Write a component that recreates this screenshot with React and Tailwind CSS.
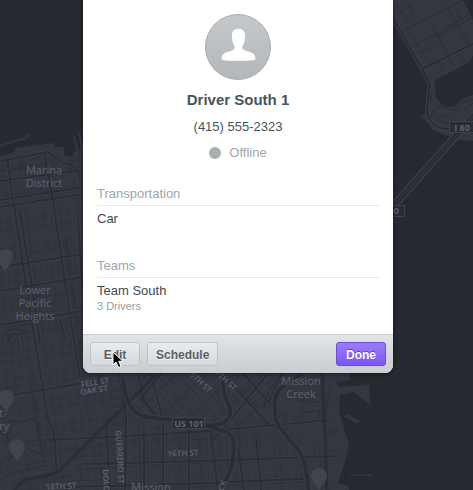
const placeLabels = [
  { text: 'Marina', x: 44, y: 174 },
  { text: 'District', x: 44, y: 187 },
  { text: 'Lower', x: 35, y: 294 },
  { text: 'Pacific', x: 35, y: 307 },
  { text: 'Heights', x: 35, y: 320 },
  { text: 'Mission', x: 301, y: 385 },
  { text: 'Creek', x: 301, y: 398 },
  { text: 'Mission', x: 151, y: 491 },
  { text: 't-', x: 3, y: 417 },
  { text: 'ry', x: 4, y: 430 },
];

const streetLabels = [
  { text: 'FELL ST', x: 95, y: 385, angle: -9 },
  { text: 'OAK ST', x: 94, y: 393, angle: -9 },
  { text: '5TH ST', x: 201, y: 385, angle: 43 },
  { text: '7TH ST', x: 226, y: 383, angle: 43 },
  { text: '16TH ST', x: 183, y: 456, angle: -2 },
  { text: '18TH ST', x: 61, y: 489, angle: -3 },
  { text: 'GUERRERO ST', x: 120, y: 460, angle: 87 },
  { text: 'DOLORES ST', x: 107, y: 496, angle: 87 },
  { text: 'JAMES LICK', x: 217, y: 504, angle: -72 },
];

const minorRoads = [
  'M66 240l12 85M30 380l12 75M0 171l44-6 12-12 14 16 13-1M19 158l6 12 8-7M30 160l12-4',
  'M8 420q14 6 22-2 10 2 8 14M0 465l24-18 23 10M13 425q-10 12-2 20M22 445q25-12 24 3M0 480l14-8 32-6',
  'M2 346v-6q4-12 16-11 9 1 9 12M7 346v-4q4-9 11-8 5 1 5 9M12 346v-2q3-5 6-4l1 5',
  'M268 404l8-18 7-13M263 409l6-18 13-18M292 419l8 4 20-2-1-10-18 1M296 401l34 1M302 390v34M300 395h30M323 383v12M279 424q-3-9 5-9 4 3-1 7l4 9',
  'M321 373l4 60 1 57M330 386l-7 42M340 430l-17 4',
];

const majorRoads = [
  'M7 158l12 82 13 82 16 98 6 13 3 41',
  'M44 152l9 48 8 55 12 80 7 42',
  'M20 212l11 68 9 62M60 320l5 20',
  'M0 161l48-9 14 10 12 4 6 12 3 2M0 207l83-13M0 200l83-13M0 181l83-11',
  'M0 267l83-13M0 291l83-14M0 325l83-14M0 397l90-15',
  'M78 220l6 90 16 75M119 373l7 45-1 72M106 420l4 70',
  'M46 440l64-3 100-6 120-11M83 464l120-3 137-5M64 487l120-3 140-6',
  'M138 373l5 24 10 18M150 373l8 28 4 15M162 373l-22 27M142 400l18 19',
  'M268 373l-31 39-27 32M222 373l47 52M240 370l38 42',
  'M189 420v70M163 424v66M144 429v61M210 426l8 64M256 438l5 52M238 447l6 43',
];

const freeways = [
  'M123 379q1 14 6 24c7 17 25 15 51 17 25 1 27 8 41 10 13 3 14 12 12 27-1 15-7 20-11 33',
  'M224 373q-3 19 4 30c5 10 2 20-12 22-13 2-18-2-24-6',
  'M318 362l-26 18q-20 10-17 31c0 17 12 24 20 35 12 14 11 28 14 48',
];

const oaklandRoads = [
  'M402 31l37-18 34-19M412 46l20-10 41-24M418 53l16-7M433 38l22-11 18-10',
  'M406 28l24 36M427 16l21 38M446 6l23 38M441 34l17-9M437 60l7 11M446 55l7 11M456 50l8 12',
  'M396 4l6 8 7-5 4 7-6 5M399 10l9 12M403 0l9 7M446 16l10-5 5 9-10 5',
  'M431 118q0-10 12-12 6 4 15 5 6 0 15-8M437 120l5-5 8 2 4 4-10 2zM454 110q6-10 12-8l7-3',
];

const mapPins = [
  { x: 5, y: 257 },
  { x: 6, y: 398 },
  { x: 17, y: 447 },
  { x: 319, y: 476 },
];

function CityMap() {
  return (
    <svg
      className="absolute inset-0 h-full w-full"
      viewBox="0 0 473 490"
      preserveAspectRatio="xMidYMin slice"
      aria-hidden="true"
    >
      <defs>
        <pattern id="west-grid" width="34" height="26" patternUnits="userSpaceOnUse" patternTransform="rotate(-8)">
          <path d="M0 4h34M0 13h34M0 21h34M5 0v26M14 4v9M13 13v13M23 0v13M21 13v8M30 0v26" fill="none" stroke="#2c2f37" />
          <path d="M0 5h34M6 0v26" fill="none" stroke="#393c45" />
        </pattern>
        <pattern id="soma-grid" width="26" height="20" patternUnits="userSpaceOnUse" patternTransform="rotate(-43)">
          <path d="M0 4h26M0 14h26M6 0v20M15 4v10M21 14v10" fill="none" stroke="#2b2e36" />
          <path d="M0 5h26M7 0v20" fill="none" stroke="#3b3e47" />
        </pattern>
        <pattern id="mission-grid" width="20" height="24" patternUnits="userSpaceOnUse" patternTransform="rotate(-3)">
          <path d="M0 5h20M0 17h20M4 0v24M11 5v12M16 0v24" fill="none" stroke="#2c2f37" />
          <path d="M0 6h20M5 0v24" fill="none" stroke="#393c45" />
        </pattern>
        <clipPath id="city-land">
          <path d="M0 156l15-4v-4l39-5v4l9 0 2 9 7 0 4-6-3-14 2 0 4 15 2 0-3-19 2 0 3 15H338l-1 235 3 14-1 15 6 21 4 12-4 18-7 21 10 3 2 7 8 3 9 11H0z" />
        </clipPath>
      </defs>

      <g clipPath="url(#city-land)">
        <rect width="473" height="490" fill="#343740" />
        <path d="M0 157l83-12v225l35 10 20 36-20 28-60 46H0z" fill="url(#west-grid)" />
        <path d="M138 370h138l-2 40-64 34-25-24-55-6z" fill="url(#soma-grid)" />
        <path d="M110 428l92-6 22 14 54-24 30 30 20-4-2 52H60z" fill="url(#mission-grid)" />
        <path d="M9 425l14-3 9-4 6 8v12l-10 5-13-2zM284 374h36l1 46-24 18-20-25z" fill="#343740" />
        <g fill="none" stroke="#2b2e36">
          {minorRoads.map((d) => (
            <path key={d} d={d} />
          ))}
        </g>
        <g fill="none" stroke="#393c45" strokeWidth="4">
          {majorRoads.map((d) => (
            <path key={d} d={d} />
          ))}
        </g>
        <g fill="none" stroke="#2a2d35" strokeWidth="2">
          {majorRoads.map((d) => (
            <path key={d} d={d} />
          ))}
        </g>
        <path d="M156 375l-98 97q-14 5-32 7l-12 11M322 360l5 130" fill="none" stroke="#2a2d35" strokeWidth="3" />
        <g fill="none" stroke="#3b3e47" strokeWidth="6">
          {freeways.map((d) => (
            <path key={d} d={d} />
          ))}
        </g>
        <g fill="none" stroke="#2a2d35" strokeWidth="4">
          {freeways.map((d) => (
            <path key={d} d={d} />
          ))}
        </g>
        <circle cx="154" cy="424" r="2" fill="none" stroke="#3b3e47" />
      </g>

      {/* Piers along the waterfront */}
      <path d="M0 146l14-5 12-3 4-4" fill="none" stroke="#343740" strokeWidth="2" />
      <path d="M337 370h13v10l-12 2zM338 387l31-2 1 20-16-13-16 3zM345 415l2-1 13 7-2 3-14-7z" fill="#343740" />
      <path d="M350 475h22" stroke="#30333b" strokeWidth="2" />

      {/* East bay and island */}
      <path
        d="M393 0h80v55l-3 7-35 18 1 18 9 9 10-1 8-8 10-3v46l-13-1-15-5-12-5-5-7-7-6 7-6 4-14-2-15-7-14-30-50z"
        fill="#343740"
      />
      <path d="M463 0l10 20V0z" fill="#262930" />
      <g fill="none" stroke="#2b2e36">
        {oaklandRoads.map((d) => (
          <path key={d} d={d} />
        ))}
      </g>
      <path d="M393 18l29 51 8 15-3 27q1 12 13 17l33 5M422 69l51-25" fill="none" stroke="#3b3e47" strokeWidth="4" />
      <path d="M393 18l29 51 8 15-3 27q1 12 13 17l33 5M422 69l51-25" fill="none" stroke="#282b33" strokeWidth="2" />
      <path d="M393 182q34-14 80-21" fill="none" stroke="#31343c" strokeDasharray="2 2" />
      <path d="M389 211l90-101" stroke="#3a3d45" strokeWidth="8" />
      <path d="M389 211l90-101" stroke="#292c34" strokeWidth="5" />
      <path d="M389 211l90-101" stroke="#363941" strokeWidth="1" />

      <g fill="#41444d">
        {mapPins.map(({ x, y }) => (
          <path key={y} d={`M${x} ${y + 15}c-3-7-8-10-8-15a8 8 0 0 1 16 0c0 5-5 8-8 15z`} />
        ))}
      </g>

      <g fill="#292c33" stroke="#3e4148">
        <rect x="449.5" y="121.5" width="26" height="11" />
        <rect x="380.5" y="205.5" width="24" height="11" />
        <rect x="172.5" y="417.5" width="32" height="11" />
      </g>
      <g className="font-['Open_Sans',sans-serif] text-[9px] font-bold" fill="#5f626a" textAnchor="middle">
        <text x="462" y="131">I 80</text>
        <text x="391" y="214">I 80</text>
        <text x="189" y="427">US 101</text>
      </g>
      <g className="font-['Open_Sans',sans-serif] text-[11px]" fill="#60636c" textAnchor="middle">
        {placeLabels.map(({ text, x, y }) => (
          <text key={`${x}-${y}`} x={x} y={y}>{text}</text>
        ))}
      </g>
      <g className="font-['Open_Sans',sans-serif] text-[8px] font-semibold" fill="#60636c" textAnchor="middle">
        {streetLabels.map(({ text, x, y, angle }) => (
          <text key={text} x={x} y={y} transform={`rotate(${angle} ${x} ${y - 3})`}>{text}</text>
        ))}
      </g>
    </svg>
  );
}

function Avatar() {
  return (
    <svg className="size-[66px]" viewBox="0 0 66 66" role="img" aria-label="Driver photo">
      <defs>
        <linearGradient id="avatar-fill" x1="0" y1="0" x2="0" y2="1">
          <stop offset="0" stopColor="#c4c8ca" />
          <stop offset="1" stopColor="#b3b7ba" />
        </linearGradient>
      </defs>
      <circle cx="33" cy="33" r="32.5" fill="url(#avatar-fill)" stroke="#aaaeb1" />
      <path
        d="M33.500 15c-4.500 0-6.600 2.200-6.600 6.200 0 1.700.2 3.300.4 4.800.3 2.600 1.200 4.500 2.200 6 .3 1.800 0 2.800-1 3.600-2.500 1.800-6.800 2.200-9.500 4-1.900 1.300-2.400 3.200-2.400 5.600 0 1.100 7.400 1.600 16.900 1.600s16.900-.5 16.900-1.600c0-2.400-.5-4.300-2.400-5.600-2.700-1.800-7-2.200-9.500-4-1-.8-1.300-1.800-1-3.600 1-1.500 1.900-3.400 2.200-6 .2-1.500.4-3.100.4-4.800 0-4-2.100-6.200-6.600-6.200z"
        fill="#fff"
      />
    </svg>
  );
}

function Section({ title, children }) {
  return (
    <section className="h-[72px]">
      <h2 className="border-b border-[#e8eaeb] pb-px text-[13px] leading-5 text-[#a0a5a8]">{title}</h2>
      <div className="pt-[3px]">{children}</div>
    </section>
  );
}

const grayButton =
  'h-6 rounded-[3px] border border-[#bfc3c5] bg-linear-to-b from-[#e9ebec] to-[#d6d9db] px-2 pt-px text-xs font-bold text-[#566166] [text-shadow:0_1px_0_#f4f5f6]';

export default function App() {
  return (
    <div className="relative flex min-h-screen items-start justify-center overflow-hidden bg-[#262930] pl-[3px] font-['Liberation_Sans',Arial,sans-serif]">
      <CityMap />
      <main className="relative w-full max-w-[310px] rounded-b-lg bg-white shadow-[0_1px_4px_#0008]">
        <div className="px-3.5 pt-3.5 pb-1.5">
          <header className="flex flex-col items-center text-[13px] leading-5 text-[#46555a]">
            <Avatar />
            <h1 className="pt-2.5 text-[15px] leading-5 font-bold">Driver South 1</h1>
            <p className="pt-[7px]">(415) 555-2323</p>
            <p className="flex items-center gap-2 pt-1.5 text-[#a0a5a8]">
              <span className="size-3 rounded-full bg-[#a9aeb1]" />
              Offline
            </p>
          </header>
          <div className="pt-[21px] text-[13px] leading-5 text-[#3c4b50]">
            <Section title="Transportation">
              <p>Car</p>
            </Section>
            <Section title="Teams">
              <p>Team South</p>
              <p className="text-[11px] leading-[10px] text-[#989da0]">3 Drivers</p>
            </Section>
          </div>
        </div>
        <footer className="relative flex items-center gap-[7px] rounded-b-lg border-t border-[#c6cacc] bg-linear-to-b from-[#e2e5e8] to-[#c9cdcf] p-[7px]">
          <button type="button" className={`${grayButton} w-[50px]`}>Edit</button>
          <button type="button" className={grayButton}>Schedule</button>
          <button
            type="button"
            className="ml-auto h-6 w-[50px] rounded-[3px] border border-[#6d4be0] bg-linear-to-b from-[#9d7bff] to-[#7c55f6] pt-px text-xs font-bold text-white [text-shadow:0_-1px_0_#5f3fd0]"
          >
            Done
          </button>
          <svg className="pointer-events-none absolute top-4 left-[29px] h-[18px] w-3" viewBox="0 0 12 18" aria-hidden="true">
            <path d="M1 1v13l3-3 2.500 5.500 2.500-1-2.300-5.200H11z" fill="#000" stroke="#fff" />
          </svg>
        </footer>
      </main>
    </div>
  );
}
